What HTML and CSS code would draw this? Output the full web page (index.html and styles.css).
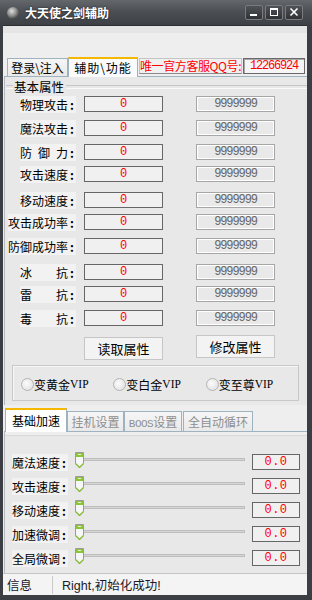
FILE: index.html
```html
<!DOCTYPE html>
<html lang="zh-CN">
<head>
    <meta charset="UTF-8">
    <title>大天使之剑辅助</title>
    <link rel="stylesheet" href="styles.css">
</head>
<body>
    <div class="window">
        <div class="titlebar">
            <span class="app-icon"></span>
            <span class="title">大天使之剑辅助</span>
            <div class="sysbtns">
                <span class="sysbtn">
                    <svg width="18" height="15" viewBox="0 0 18 15"><rect x="5" y="9" width="7" height="2" fill="#fff"/></svg>
                </span>
                <span class="sysbtn">
                    <svg width="18" height="15" viewBox="0 0 18 15"><rect x="5.5" y="3.5" width="7" height="7" fill="none" stroke="#fff"/><rect x="5" y="3" width="8" height="2" fill="#fff"/></svg>
                </span>
                <span class="sysbtn">
                    <svg width="18" height="15" viewBox="0 0 18 15"><path d="M5.5 3.5l7 7M12.5 3.5l-7 7" stroke="#fff" stroke-width="1.6"/></svg>
                </span>
            </div>
        </div>
        <div class="client">
            <div class="topstrip"></div>
            <!-- 상단 탭 + 고객센터 QQ -->
            <div class="tabs tabs-main">
                <div class="tab">登录\注入</div>
                <div class="tab active">辅助\功能</div>
                <div class="qq-label">唯一官方客服QQ号:</div>
                <div class="qq-box">12266924</div>
            </div>
            <div class="panel panel-attr">
                <div class="group-title"><span>基本属性</span></div>
                <div class="attr-list">
                    <div class="attr-row">
                        <div class="lbl-col"><div class="lbl"><span class="txt">物理攻击</span><span class="colon">:</span></div></div>
                        <div class="val">0</div>
                        <div class="max">9999999</div>
                    </div>
                    <div class="attr-row">
                        <div class="lbl-col"><div class="lbl"><span class="txt">魔法攻击</span><span class="colon">:</span></div></div>
                        <div class="val">0</div>
                        <div class="max">9999999</div>
                    </div>
                    <div class="attr-row">
                        <div class="lbl-col"><div class="lbl"><span class="txt sp"><i>防</i><i>御</i><i>力</i></span><span class="colon">:</span></div></div>
                        <div class="val">0</div>
                        <div class="max">9999999</div>
                    </div>
                    <div class="attr-row m6">
                        <div class="lbl-col"><div class="lbl"><span class="txt">攻击速度</span><span class="colon">:</span></div></div>
                        <div class="val">0</div>
                        <div class="max">9999999</div>
                    </div>
                    <div class="attr-row m10">
                        <div class="lbl-col"><div class="lbl"><span class="txt">移动速度</span><span class="colon">:</span></div></div>
                        <div class="val">0</div>
                        <div class="max">9999999</div>
                    </div>
                    <div class="attr-row m6">
                        <div class="lbl-col"><div class="lbl"><span class="txt">攻击成功率</span><span class="colon">:</span></div></div>
                        <div class="val">0</div>
                        <div class="max">9999999</div>
                    </div>
                    <div class="attr-row">
                        <div class="lbl-col"><div class="lbl"><span class="txt">防御成功率</span><span class="colon">:</span></div></div>
                        <div class="val">0</div>
                        <div class="max">9999999</div>
                    </div>
                    <div class="attr-row m10">
                        <div class="lbl-col"><div class="lbl"><span class="txt sp"><i>冰</i><i>抗</i></span><span class="colon">:</span></div></div>
                        <div class="val">0</div>
                        <div class="max">9999999</div>
                    </div>
                    <div class="attr-row m6">
                        <div class="lbl-col"><div class="lbl"><span class="txt sp"><i>雷</i><i>抗</i></span><span class="colon">:</span></div></div>
                        <div class="val">0</div>
                        <div class="max">9999999</div>
                    </div>
                    <div class="attr-row">
                        <div class="lbl-col"><div class="lbl"><span class="txt sp"><i>毒</i><i>抗</i></span><span class="colon">:</span></div></div>
                        <div class="val">0</div>
                        <div class="max">9999999</div>
                    </div>
                </div>
                <div class="btn-row">
                    <button class="btn">读取属性</button>
                    <button class="btn btn-up">修改属性</button>
                </div>
                <div class="vip-box">
                    <label class="radio"><span class="dot"></span>变黄金<span class="latin">VIP</span></label>
                    <label class="radio"><span class="dot"></span>变白金<span class="latin">VIP</span></label>
                    <label class="radio"><span class="dot"></span>变至尊<span class="latin">VIP</span></label>
                </div>
            </div>
            <!-- 하단 탭 -->
            <div class="tabs tabs-sub">
                <div class="tab active">基础加速</div>
                <div class="tab off w57">挂机设置</div>
                <div class="tab off w58"><span class="latin">BOOS</span>设置</div>
                <div class="tab off w70">全自动循环</div>
            </div>
            <div class="panel panel-speed">
                <div class="speed-row">
                    <div class="lbl"><span class="txt">魔法速度</span><span class="colon">:</span></div>
                    <div class="slider"><span class="track"></span><svg class="thumb" width="9" height="16" viewBox="0 0 9 16"><path d="M0.5 0.5h8v11l-4 4l-4-4z" fill="#f6f6f6" stroke="#9a9a9a"/><rect x="1" y="1" width="7" height="4" fill="#8cc43c"/><rect x="3" y="2" width="3" height="1" fill="#e8f6d0"/><path d="M0.5 11.5l4 4l4-4" fill="none" stroke="#7cb72c" stroke-width="1.2"/></svg></div>
                    <div class="num">0.0</div>
                </div>
                <div class="speed-row">
                    <div class="lbl"><span class="txt">攻击速度</span><span class="colon">:</span></div>
                    <div class="slider"><span class="track"></span><svg class="thumb" width="9" height="16" viewBox="0 0 9 16"><path d="M0.5 0.5h8v11l-4 4l-4-4z" fill="#f6f6f6" stroke="#9a9a9a"/><rect x="1" y="1" width="7" height="4" fill="#8cc43c"/><rect x="3" y="2" width="3" height="1" fill="#e8f6d0"/><path d="M0.5 11.5l4 4l4-4" fill="none" stroke="#7cb72c" stroke-width="1.2"/></svg></div>
                    <div class="num">0.0</div>
                </div>
                <div class="speed-row">
                    <div class="lbl"><span class="txt">移动速度</span><span class="colon">:</span></div>
                    <div class="slider"><span class="track"></span><svg class="thumb" width="9" height="16" viewBox="0 0 9 16"><path d="M0.5 0.5h8v11l-4 4l-4-4z" fill="#f6f6f6" stroke="#9a9a9a"/><rect x="1" y="1" width="7" height="4" fill="#8cc43c"/><rect x="3" y="2" width="3" height="1" fill="#e8f6d0"/><path d="M0.5 11.5l4 4l4-4" fill="none" stroke="#7cb72c" stroke-width="1.2"/></svg></div>
                    <div class="num">0.0</div>
                </div>
                <div class="speed-row">
                    <div class="lbl"><span class="txt">加速微调</span><span class="colon">:</span></div>
                    <div class="slider"><span class="track"></span><svg class="thumb" width="9" height="16" viewBox="0 0 9 16"><path d="M0.5 0.5h8v11l-4 4l-4-4z" fill="#f6f6f6" stroke="#9a9a9a"/><rect x="1" y="1" width="7" height="4" fill="#8cc43c"/><rect x="3" y="2" width="3" height="1" fill="#e8f6d0"/><path d="M0.5 11.5l4 4l4-4" fill="none" stroke="#7cb72c" stroke-width="1.2"/></svg></div>
                    <div class="num">0.0</div>
                </div>
                <div class="speed-row">
                    <div class="lbl"><span class="txt">全局微调</span><span class="colon">:</span></div>
                    <div class="slider"><span class="track"></span><svg class="thumb" width="9" height="16" viewBox="0 0 9 16"><path d="M0.5 0.5h8v11l-4 4l-4-4z" fill="#f6f6f6" stroke="#9a9a9a"/><rect x="1" y="1" width="7" height="4" fill="#8cc43c"/><rect x="3" y="2" width="3" height="1" fill="#e8f6d0"/><path d="M0.5 11.5l4 4l4-4" fill="none" stroke="#7cb72c" stroke-width="1.2"/></svg></div>
                    <div class="num">0.0</div>
                </div>
            </div>
            <div class="statusbar">
                <span class="st-cell">信息</span>
                <span class="st-msg">Right,初始化成功!</span>
            </div>
        </div>
    </div>
</body>
</html>
```

FILE: styles.css
```css
* { margin: 0; padding: 0; box-sizing: border-box; }
i { font-style: normal; }
body {
    background: #3b3e42;
    font-family: "Noto Sans CJK SC", sans-serif;
    font-size: 12px;
    color: #000;
}
.window {
    width: 312px;
    height: 600px;
    display: flex;
    flex-direction: column;
    background: #3b3e42;
}
/* 타이틀바 */
.titlebar {
    height: 25px;
    flex: none;
    display: flex;
    align-items: center;
    padding: 0 9px 0 7px;
    background: linear-gradient(#64676b, #4c4f53 45%, #3d4044);
}
.app-icon {
    width: 12px;
    height: 12px;
    border-radius: 50%;
    background: radial-gradient(circle at 40% 35%, #e0e0e0, #8a8a8a 45%, #3a3a3a 80%);
}
.title {
    margin-left: 6px;
    color: #fff;
    font-weight: bold;
    font-size: 12px;
    line-height: 14px;
    text-shadow: 0 0 2px #1c1e20;
}
.sysbtns {
    margin-left: auto;
    display: flex;
    gap: 2px;
}
.sysbtn {
    width: 18px;
    height: 15px;
    border: 1px solid #797b7f;
    border-radius: 2px;
    background: linear-gradient(#4f5256, #303236);
    display: flex;
    align-items: center;
    justify-content: center;
}
.sysbtn svg { display: block; margin: -1px; }
/* 본문 */
.client {
    flex: 1;
    margin: 0 5px 5px 3px;
    background: #eeeeee;
    border-top: 1px solid #2c2e31;
    display: flex;
    flex-direction: column;
}
.topstrip {
    height: 7px;
    background: #e5e5e5;
}
.tabs {
    display: flex;
    align-items: flex-end;
    flex: none;
}
.tabs-main {
    margin-top: 24px;
    height: 19px;
    padding-left: 4px;
}
.tab {
    height: 18px;
    border: 1px solid #9eb2c0;
    border-bottom: none;
    background: linear-gradient(#f6f6f6, #e9e9e9);
    text-align: center;
    line-height: 17px;
    font-size: 12px;
}
.tabs-main .tab { width: 61px; }
.tabs-main .tab.active { width: 70px; }
.tab.active {
    height: 20px;
    margin-bottom: -1px;
    position: relative;
    background: #fbfbfb;
    border-top: 2px solid #f5b800;
    line-height: 17px;
    letter-spacing: 1px;
}
.qq-label {
    width: 103px;
    height: 16px;
    margin: 0 0 2px 1px;
    border: 1px solid #c4c4c4;
    border-bottom-color: #8a8a8a;
    background: #f0f0f0;
    color: #ff0000;
    line-height: 14px;
    letter-spacing: -0.4px;
    white-space: nowrap;
}
.qq-box {
    width: 62px;
    height: 16px;
    margin: 0 0 2px 1px;
    border: 1px solid #6a6a6a;
    box-shadow: inset 1px 1px #a8a8a8;
    background: #f5f5f5;
    color: #ff0000;
    font-family: "Liberation Mono", monospace;
    font-size: 12px;
    line-height: 14px;
    letter-spacing: -1.2px;
    text-align: center;
}
.panel {
    flex: none;
    margin-left: 1px;
    border-top: 1px solid #9eb2c0;
    border-left: 1px solid #b4b8bc;
    background: #e8e8e8;
}
.panel-attr {
    height: 329px;
    padding-top: 2px;
}
.group-title {
    height: 16px;
    display: flex;
    align-items: center;
    padding-left: 1px;
}
.group-title::before, .group-title::after {
    content: "";
    height: 2px;
    border-top: 1px solid #c6c6c6;
    border-bottom: 1px solid #fafafa;
}
.group-title::before { width: 7px; }
.group-title::after { flex: 1; }
.group-title span {
    padding: 0 2px 0 1px;
    font-size: 12.5px;
    line-height: 16px;
}
.attr-list { margin-top: 1px; }
.attr-row {
    height: 16px;
    display: flex;
    align-items: center;
    margin-top: 8px;
}
.attr-row:first-child { margin-top: 0; }
.attr-row.m6 { margin-top: 6px; }
.attr-row.m10 { margin-top: 10px; }
.lbl-col {
    width: 71px;
    display: flex;
    justify-content: flex-end;
}
.lbl {
    display: flex;
    height: 17px;
    line-height: 17px;
    background: #f2f2f2;
    white-space: nowrap;
}
.lbl .txt { display: flex; }
.lbl .txt.sp { width: 48px; justify-content: space-between; }
.lbl .colon { width: 8px; text-align: center; font-weight: bold; }
.val, .max {
    width: 79px;
    height: 16px;
    text-align: center;
    font-family: "Liberation Mono", monospace;
    font-size: 12px;
    line-height: 14px;
}
.val {
    margin-left: 8px;
    border: 1px solid #666;
    background: #f0f0f0;
    color: #ff0000;
}
.max {
    margin-left: 33px;
    border: 1px solid #a6a6a6;
    box-shadow: inset 1px 1px #fff, inset -1px -1px #fff;
    background: #e9e9e9;
    color: #666;
    letter-spacing: -1.1px;
}
.btn-row {
    margin-top: 11px;
    padding-left: 79px;
    display: flex;
    gap: 33px;
    align-items: flex-start;
}
.btn {
    width: 79px;
    height: 23px;
    border: 1px solid #c6c6c6;
    background: #f3f3f3;
    font-family: "Noto Sans CJK SC", sans-serif;
    font-size: 13px;
    color: #000;
}
.btn-up { margin-top: -2px; }
.vip-box {
    margin: 5px 0 0 7px;
    width: 287px;
    height: 36px;
    border: 1px solid #c8c8c8;
    box-shadow: inset 1px 1px #f6f6f6;
    display: flex;
    align-items: center;
    padding: 2px 0 0 8px;
}
.radio {
    width: 96px;
    display: flex;
    align-items: center;
    font-size: 12px;
}
.dot {
    width: 13px;
    height: 13px;
    border-radius: 50%;
    border: 1px solid #b4b4b4;
    background: radial-gradient(circle at 40% 40%, #fbfbfb, #dcdcdc);
}
.latin {
    font-family: "Liberation Serif", serif;
    font-size: 11.5px;
}
.tabs-sub {
    margin-top: 3px;
    height: 23px;
    padding-left: 2px;
}
.tabs-sub .tab { height: 20px; line-height: 19px; }
.tabs-sub .tab.active {
    width: 62px;
    height: 24px;
    line-height: 21px;
    letter-spacing: 0;
    background: #fff;
}
.tab.off { color: #8e8e8e; }
.tab.w57 { width: 57px; }
.tab.w58 { width: 58px; margin-left: 0; }
.tab.w70 { width: 70px; margin-left: 1px; }
.tab .latin { font-family: "Liberation Mono", monospace; font-size: 11px; letter-spacing: -0.5px; }
.panel-speed {
    height: 142px;
    padding: 22px 0 0 7px;
    box-shadow: inset 0 3px #eeeeee, inset 0 4px #d9d9d9;
}
.speed-row {
    height: 16px;
    display: flex;
    align-items: center;
    margin-bottom: 8px;
}
.speed-row .lbl { width: 56px; }
.slider {
    position: relative;
    margin-left: 7px;
    width: 170px;
    height: 16px;
}
.track {
    position: absolute;
    left: 6px;
    right: 0;
    top: 4px;
    height: 3px;
    border: 1px solid #bdbdbd;
    background: #d6d6d6;
}
.thumb {
    position: absolute;
    left: 0;
    top: -2px;
}
.num {
    margin-left: 7px;
    width: 48px;
    height: 16px;
    border: 1px solid #666;
    background: #f0f0f0;
    color: #ff0000;
    text-align: center;
    font-family: "Liberation Mono", monospace;
    font-size: 12px;
    line-height: 14px;
    letter-spacing: 0.5px;
}
.statusbar {
    flex: 1;
    display: flex;
    align-items: center;
    border-top: 1px solid #c6c6c6;
    background: #f4f4f4;
    font-size: 12.5px;
    color: #1a1a2a;
}
.st-cell {
    width: 50px;
    height: 18px;
    line-height: 18px;
    padding-left: 4px;
    border-right: 1px solid #cacaca;
}
.st-msg {
    padding-left: 9px;
    font-family: "Liberation Sans", "Noto Sans CJK SC", sans-serif;
}
```
